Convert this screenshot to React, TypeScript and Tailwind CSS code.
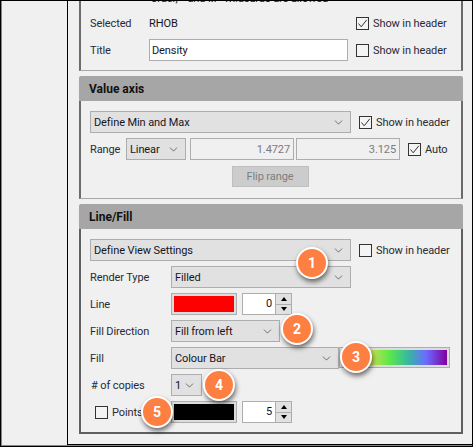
import { ChevronDown } from "lucide-react";
import type { ReactNode } from "react";

function Check({ checked, label, className = "" }: { checked?: boolean; label?: string; className?: string }) {
  return (
    <div className={`flex items-center gap-[4px] ${className}`}>
      <div className="w-[13px] h-[13px] border border-[#333333] bg-[#f4f4f4] flex items-center justify-center shrink-0">
        {checked && (
          <svg width="11" height="11" viewBox="0 0 11 11" fill="none">
            <path d="M1.5 5.5 L4.2 8.8 L9.8 1.8" stroke="#333333" strokeWidth="1" />
          </svg>
        )}
      </div>
      {label && <span className="text-[#2a2a35] whitespace-nowrap">{label}</span>}
    </div>
  );
}

function Select({ value, className = "" }: { value: string; className?: string }) {
  return (
    <div className={`h-[22px] border border-[#adadad] bg-[#e1e1e1] flex items-center justify-between pl-[3px] pr-[5px] shrink-0 ${className}`}>
      <span className="text-[#15151f] whitespace-nowrap">{value}</span>
      <ChevronDown size={13} strokeWidth={1.1} className="text-[#222222] shrink-0" />
    </div>
  );
}

function Swatch({ className }: { className: string }) {
  return (
    <div className="w-[66px] h-[22px] border border-[#adadad] bg-[#dcdcdc] p-[2px] shrink-0">
      <div className={`w-full h-full ${className}`} />
    </div>
  );
}

function Spin({ value }: { value: string }) {
  return (
    <div className="w-[50px] h-[22px] border border-[#adadad] bg-white flex shrink-0 ml-[5px]">
      <div className="flex-1 text-right pr-[3px] leading-[20px] text-[#15151f]">{value}</div>
      <div className="w-[16px] flex flex-col">
        <div className="flex-1 bg-[#e1e1e1] border-l border-b border-[#adadad] flex items-center justify-center">
          <div className="w-0 h-0 border-x-[3px] border-x-transparent border-b-[4px] border-b-black" />
        </div>
        <div className="flex-1 bg-[#e1e1e1] border-l border-[#adadad] flex items-center justify-center">
          <div className="w-0 h-0 border-x-[3px] border-x-transparent border-t-[4px] border-t-black" />
        </div>
      </div>
    </div>
  );
}

function Label({ children }: { children: ReactNode }) {
  return <span className="w-[81px] shrink-0 text-[#2a2a35] whitespace-nowrap">{children}</span>;
}

function SectionHeader({ title }: { title: string }) {
  return (
    <div className="h-[25px] bg-[#a6a6a6] rounded-t-[2px] flex items-center pl-[10px] font-bold text-[12px] tracking-normal text-[#111111]">
      {title}
    </div>
  );
}

function Badge({ n, className }: { n: number; className: string }) {
  return (
    <div className={`absolute w-[32px] h-[32px] rounded-full bg-[#fd7f41] border-2 border-white shadow-[1px_3px_5px_rgba(0,0,0,0.55)] flex items-center justify-center text-white font-bold text-[14px] tracking-normal ${className}`}>
      {n}
    </div>
  );
}

export default function App() {
  return (
    <div className="relative w-[473px] h-[447px] overflow-hidden bg-black font-['Roboto',sans-serif] text-[11px] tracking-[-0.1px] leading-none p-px">
      <div className="h-full border-l border-b border-[#3b9ae1] flex">
        <div className="w-[65px] h-full bg-[#f0f0f0] shrink-0" />
        <div className="w-px bg-black shrink-0" />
        <div className="flex-1 bg-[#f0f0f0] pl-[11px] pr-[9px] mb-px flex flex-col">
          {/* file group, scrolled off the top */}
          <div className="h-[70px] border-x-2 border-b border-x-[#6b6b6b] border-b-[#a8a8a8] relative overflow-hidden pl-[9px] shrink-0">
            <div className="h-[4px] relative">
              <span className="absolute -top-[8px] left-[61px] text-[#15151f] whitespace-pre">order, * and ...   wildcards are allowed</span>
            </div>
            <div className="h-[18px] mt-[9px] flex items-center">
              <span className="w-[59px] shrink-0 text-[#2a2a35]">Selected</span>
              <span className="w-[207px] shrink-0 text-[#15151f]">RHOB</span>
              <Check checked label="Show in header" />
            </div>
            <div className="mt-[7px] flex items-center">
              <span className="w-[59px] shrink-0 text-[#2a2a35]">Title</span>
              <div className="w-[199px] h-[22px] border border-[#adadad] bg-white flex items-center pl-[2px] text-[#15151f]">Density</div>
              <Check label="Show in header" className="ml-[8px]" />
            </div>
          </div>

          <div className="mt-[5px] shrink-0">
            <SectionHeader title="Value axis" />
            <div className="h-[98px] border-x-2 border-b border-x-[#6b6b6b] border-b-[#a8a8a8] pl-[9px] pt-[10px]">
              <div className="flex items-center gap-[8px]">
                <Select value="Define Min and Max" className="w-[261px]" />
                <Check checked label="Show in header" />
              </div>
              <div className="flex items-center mt-[5px]">
                <span className="w-[36px] text-[#2a2a35]">Range</span>
                <Select value="Linear" className="w-[60px]" />
                <div className="w-[104px] h-[22px] ml-[4px] border border-[#adadad] text-[#7a7a7a] flex items-center justify-end pr-[3px]">1.4727</div>
                <div className="w-[104px] h-[22px] ml-[2px] border border-[#adadad] text-[#7a7a7a] flex items-center justify-end pr-[3px]">3.125</div>
                <Check checked label="Auto" className="ml-[8px]" />
              </div>
              <div className="flex justify-center mt-[6px] w-[360px]">
                <div className="w-[77px] h-[21px] bg-[#cccccc] border border-[#bfbfbf] text-[#7d7d7d] flex items-center justify-center">Flip range</div>
              </div>
            </div>
          </div>

          <div className="mt-[5px] flex-1 mb-[10px] flex flex-col">
            <SectionHeader title="Line/Fill" />
            <div className="flex-1 border-x-2 border-b-2 border-[#5f5f5f] pl-[9px] pt-[10px] flex flex-col gap-[5px]">
              <div className="flex items-center gap-[8px]">
                <Select value="Define View Settings" className="w-[261px]" />
                <Check label="Show in header" />
              </div>
              <div className="flex items-center">
                <Label>Render Type</Label>
                <Select value="Filled" className="w-[180px]" />
              </div>
              <div className="flex items-center">
                <Label>Line</Label>
                <Swatch className="bg-[#ff0000]" />
                <Spin value="0" />
              </div>
              <div className="flex items-center">
                <Label>Fill Direction</Label>
                <Select value="Fill from left" className="w-[109px]" />
              </div>
              <div className="flex items-start">
                <Label>
                  <span className="block pt-[6px]">Fill</span>
                </Label>
                <Select value="Colour Bar" className="w-[168px]" />
                <div className="w-[111px] h-[21px] border border-[#adadad] bg-[#dcdcdc] p-[2px] shrink-0">
                  <div className="w-full h-full bg-[linear-gradient(90deg,#f5e34a_0%,#b8e050_30%,#5ce84a_45%,#35b8a0_63%,#6a6cff_80%,#8000a0_100%)]" />
                </div>
              </div>
              <div className="flex items-center">
                <Label>
                  <span className="pl-px"># of copies</span>
                </Label>
                <Select value="1" className="w-[31px]" />
              </div>
              <div className="flex items-center">
                <div className="w-[81px] shrink-0 pl-[5px]">
                  <Check label="Points" />
                </div>
                <Swatch className="bg-black" />
                <Spin value="5" />
              </div>
            </div>
          </div>
        </div>
      </div>

      <Badge n={1} className="left-[296px] top-[247px]" />
      <Badge n={2} className="left-[281px] top-[313px]" />
      <Badge n={3} className="left-[340px] top-[341px]" />
      <Badge n={4} className="left-[203px] top-[369px]" />
      <Badge n={5} className="left-[141px] top-[396px]" />
    </div>
  );
}
